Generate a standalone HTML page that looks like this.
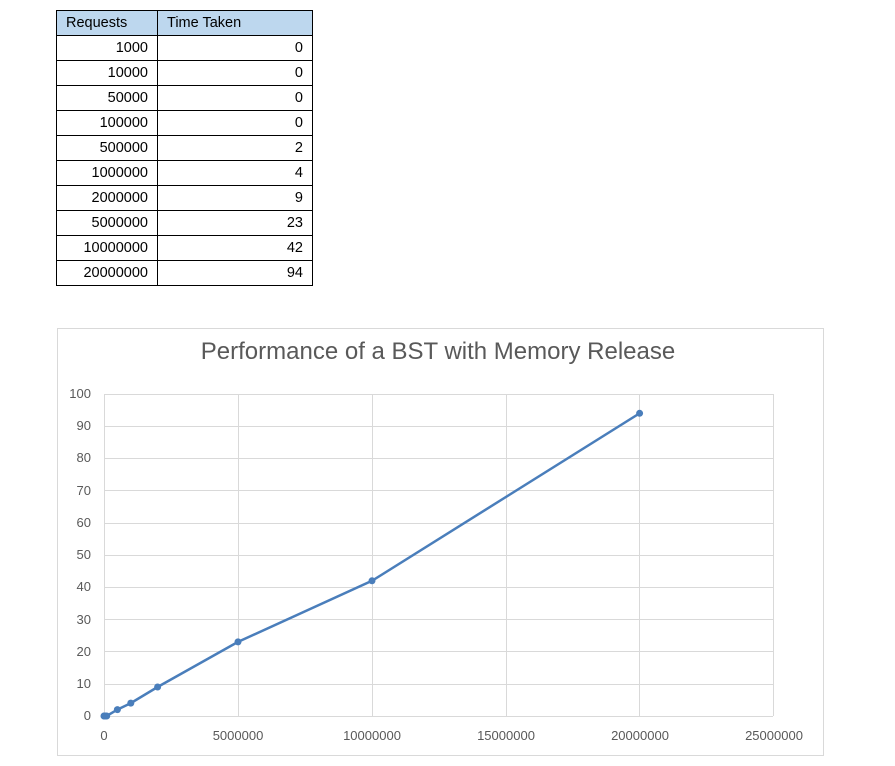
<!DOCTYPE html>
<html><head><style>
body{margin:0;background:#fff;width:895px;height:766px;position:relative;font-family:"Liberation Sans",sans-serif;overflow:hidden}
table{position:absolute;left:56px;top:10px;border-collapse:collapse;font-size:14.5px;color:#000}
td{border:1px solid #000;height:25px;padding:0 9px;box-sizing:border-box;text-align:right;line-height:24px}
td.a{width:101px}td.b{width:155px}
tr.h td{background:#bdd7ee;text-align:left}
</style></head><body>
<table>
<tr class="h"><td class="a">Requests</td><td class="b">Time Taken</td></tr>
<tr><td class="a">1000</td><td class="b">0</td></tr>
<tr><td class="a">10000</td><td class="b">0</td></tr>
<tr><td class="a">50000</td><td class="b">0</td></tr>
<tr><td class="a">100000</td><td class="b">0</td></tr>
<tr><td class="a">500000</td><td class="b">2</td></tr>
<tr><td class="a">1000000</td><td class="b">4</td></tr>
<tr><td class="a">2000000</td><td class="b">9</td></tr>
<tr><td class="a">5000000</td><td class="b">23</td></tr>
<tr><td class="a">10000000</td><td class="b">42</td></tr>
<tr><td class="a">20000000</td><td class="b">94</td></tr>
</table>
<svg width="895" height="766" style="position:absolute;left:0;top:0" font-family="Liberation Sans, sans-serif">
<rect x="57.5" y="328.5" width="766" height="427" fill="none" stroke="#d9d9d9"/>
<text x="438" y="359" font-size="24" fill="#595959" text-anchor="middle">Performance of a BST with Memory Release</text>
<g stroke="#d9d9d9" stroke-width="1">
<line x1="104" y1="394.5" x2="773" y2="394.5"/><line x1="104" y1="426.5" x2="773" y2="426.5"/>
<line x1="104" y1="458.5" x2="773" y2="458.5"/><line x1="104" y1="490.5" x2="773" y2="490.5"/>
<line x1="104" y1="523.5" x2="773" y2="523.5"/><line x1="104" y1="555.5" x2="773" y2="555.5"/>
<line x1="104" y1="587.5" x2="773" y2="587.5"/><line x1="104" y1="619.5" x2="773" y2="619.5"/>
<line x1="104" y1="651.5" x2="773" y2="651.5"/><line x1="104" y1="684.5" x2="773" y2="684.5"/>
<line x1="104" y1="716.5" x2="773" y2="716.5"/>
<line x1="104.5" y1="394" x2="104.5" y2="716"/><line x1="238.5" y1="394" x2="238.5" y2="716"/>
<line x1="372.5" y1="394" x2="372.5" y2="716"/><line x1="506.5" y1="394" x2="506.5" y2="716"/>
<line x1="639.5" y1="394" x2="639.5" y2="716"/><line x1="773.5" y1="394" x2="773.5" y2="716"/>
</g>
<g font-size="13" fill="#595959" text-anchor="end">
<text x="91" y="398">100</text><text x="91" y="430">90</text><text x="91" y="462">80</text>
<text x="91" y="495">70</text><text x="91" y="527">60</text><text x="91" y="559">50</text>
<text x="91" y="591">40</text><text x="91" y="624">30</text><text x="91" y="656">20</text>
<text x="91" y="688">10</text><text x="91" y="720">0</text>
</g>
<g font-size="13" fill="#595959" text-anchor="middle">
<text x="104" y="740">0</text><text x="238" y="740">5000000</text><text x="372" y="740">10000000</text>
<text x="506" y="740">15000000</text><text x="640" y="740">20000000</text><text x="774" y="740">25000000</text>
</g>
<polyline fill="none" stroke="#4a7ebb" stroke-width="2.5" points="104,716 104.3,716 105.3,716 106.7,716 117.4,709.6 130.8,703.1 157.6,687 238,641.9 372,580.8 639.6,413.3"/>
<g fill="#4a7ebb">
<circle cx="104" cy="716" r="3.5"/><circle cx="104.3" cy="716" r="3.5"/><circle cx="105.3" cy="716" r="3.5"/><circle cx="106.7" cy="716" r="3.5"/>
<circle cx="117.4" cy="709.6" r="3.5"/><circle cx="130.8" cy="703.1" r="3.5"/><circle cx="157.6" cy="687" r="3.5"/>
<circle cx="238" cy="641.9" r="3.5"/><circle cx="372" cy="580.8" r="3.5"/><circle cx="639.6" cy="413.3" r="3.5"/>
</g>
</svg>
</body></html>
